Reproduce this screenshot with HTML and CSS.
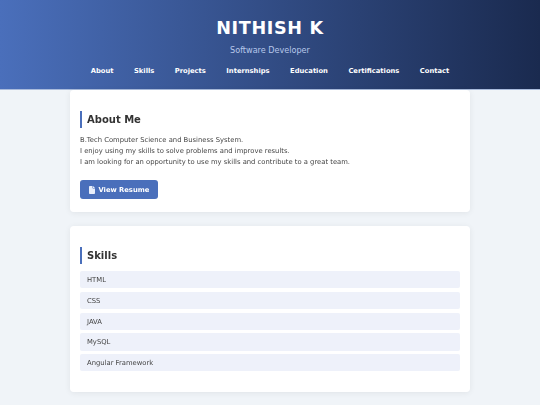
FILE: index.html
```html
<!DOCTYPE html>
<html lang="en">
<head>
    <meta charset="UTF-8">
    <meta name="viewport" content="width=device-width, initial-scale=1.0">
    <title>Nithish K</title>
    <link rel="stylesheet" href="styles.css">
</head>
<body>
    <header class="hero">
        <h1>NITHISH K</h1>
        <p class="tagline">Software Developer</p>
        <nav class="nav">
            <a href="#about">About</a>
            <a href="#skills">Skills</a>
            <a href="#projects">Projects</a>
            <a href="#internships">Internships</a>
            <a href="#education">Education</a>
            <a href="#certifications">Certifications</a>
            <a href="#contact">Contact</a>
        </nav>
    </header>

    <main class="content">
        <section class="card card-about" id="about">
            <h2>About Me</h2>
            <p class="about-text">
                B.Tech Computer Science and Business System.<br>
                I enjoy using my skills to solve problems and improve results.<br>
                I am looking for an opportunity to use my skills and contribute to a great team.
            </p>
            <a class="btn" href="#resume">
                <svg class="btn-icon" viewBox="0 0 384 512" aria-hidden="true"><path d="M64 0C29 0 0 29 0 64v384c0 35 29 64 64 64h256c35 0 64-29 64-64V160H256c-18 0-32-14-32-32V0H64zm192 0v128h128L256 0z"/></svg>
                View Resume
            </a>
        </section>

        <section class="card" id="skills">
            <h2>Skills</h2>
            <ul class="skills">
                <li>HTML</li>
                <li>CSS</li>
                <li>JAVA</li>
                <li>MySQL</li>
                <li>Angular Framework</li>
            </ul>
        </section>
    </main>
</body>
</html>
```

FILE: styles.css
```css
* {
    margin: 0;
    padding: 0;
    box-sizing: border-box;
}

body {
    background-color: #f0f4f8;
    color: #333;
    font-family: "DejaVu Sans", sans-serif;
    font-size: 8px;
}

.hero {
    height: 90px;
    padding-top: 17px;
    background: linear-gradient(90deg, #4a6fbb, #1a2a4f);
    border-bottom: 1px solid #a9bbdc;
    text-align: center;
    color: #fff;
    will-change: opacity;
}

.hero h1 {
    font-size: 17.6px;
    line-height: 22px;
    letter-spacing: 0.67px;
    font-weight: 700;
}

.tagline {
    margin-top: 5px;
    font-size: 8.1px;
    line-height: 12px;
    color: #b8c8ea;
}

.nav {
    display: flex;
    justify-content: center;
    gap: 20.5px;
    margin-top: 9px;
}

.nav a {
    color: #fff;
    font-size: 6.75px;
    line-height: 12px;
    font-weight: 700;
    text-decoration: none;
}

.content {
    width: 400px;
    margin: 0 auto;
}

.card {
    margin-bottom: 14px;
    padding: 21px 10px 20px;
    background-color: #fff;
    border-radius: 4px;
    box-shadow: 0 1px 6px rgba(0, 0, 0, 0.07);
    will-change: opacity;
}

.card-about {
    height: 122px;
}

.card h2 {
    padding-left: 5px;
    border-left: 2.5px solid #4a6fbb;
    font-size: 10px;
    line-height: 17px;
    font-weight: 700;
    color: #333;
}

.about-text {
    margin-top: 6.5px;
    font-size: 6.8px;
    line-height: 11px;
    color: #444;
}

.btn {
    display: inline-flex;
    align-items: center;
    gap: 3.5px;
    height: 19px;
    margin-top: 12.5px;
    padding: 0 8.5px 0 9px;
    background-color: #4a6fbb;
    border-radius: 3px;
    color: #fff;
    font-size: 6.75px;
    font-weight: 700;
    text-decoration: none;
}

.btn-icon {
    width: 6px;
    height: 8px;
    fill: #e8eefa;
}

.skills {
    list-style: none;
    display: flex;
    flex-direction: column;
    gap: 3.5px;
    margin-top: 7px;
}

.skills li {
    height: 17.3px;
    padding-left: 7px;
    background-color: #eef1fa;
    border-radius: 2px;
    font-size: 6.8px;
    line-height: 18.3px;
    color: #444;
}

#skills {
    padding-bottom: 21px;
}
```
